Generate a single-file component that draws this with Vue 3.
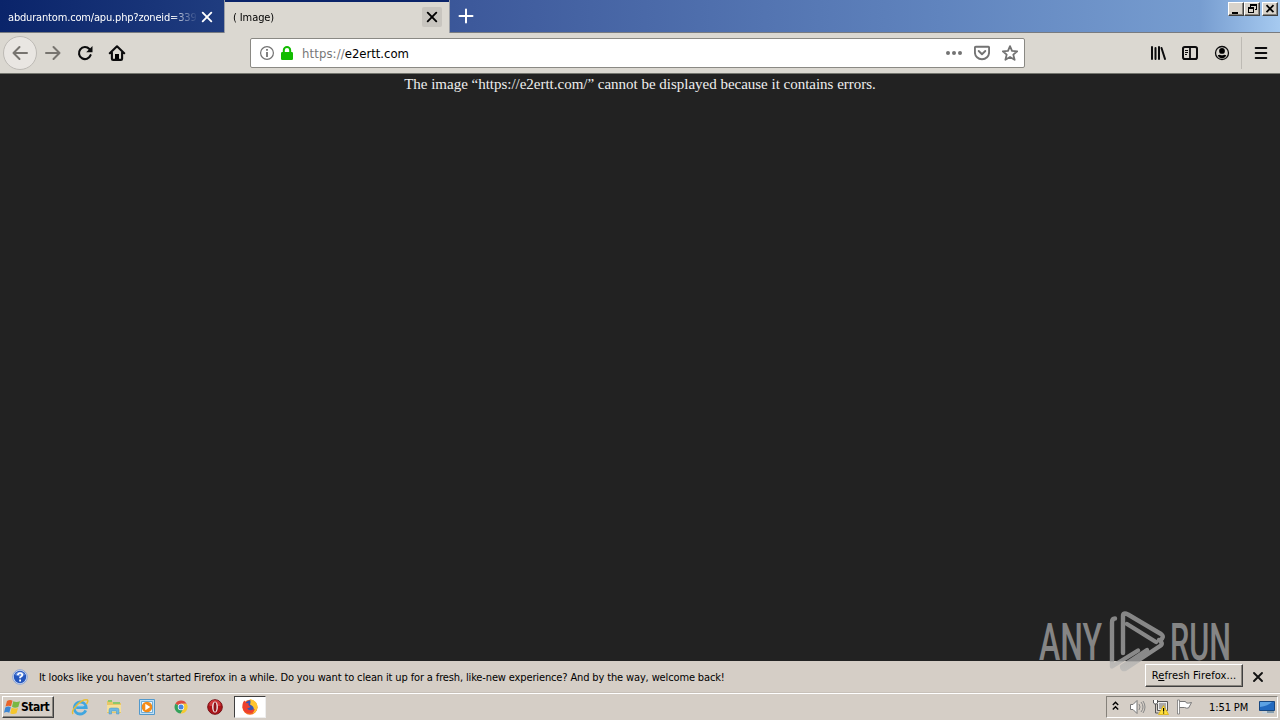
<script setup>
const tabs = [
  { title: 'abdurantom.com/apu.php?zoneid=339', active: false },
  { title: '( Image)', active: true },
]
</script>

<template>
  <div class="screen">
    <header class="titlebar">
      <div v-for="t in tabs" :key="t.title" class="tab" :class="{ active: t.active }">
        <span class="tab-title">{{ t.title }}</span>
        <span class="tab-close">
          <svg width="20" height="20" viewBox="0 0 20 20"><path d="M5.7 5.7l8.6 8.6M14.3 5.7l-8.6 8.6" fill="none" stroke="currentColor" stroke-width="1.9" stroke-linecap="round" /></svg>
        </span>
      </div>
      <svg class="plus" width="16" height="16" viewBox="0 0 16 16"><path d="M8 1.5v13M1.5 8h13" stroke="#fff" stroke-width="2" stroke-linecap="round" /></svg>
      <div class="winbtns">
        <span class="wb"><svg width="14" height="12" viewBox="0 0 14 12"><path d="M3 9h6v2H3z" /></svg></span>
        <span class="wb"><svg width="14" height="12" viewBox="0 0 14 12"><path d="M5 1h7v6h-2V6h1V3H6v1H5zM3 4h6v6H3zM4 6v3h4V6z" fill-rule="evenodd" /></svg></span>
        <span class="wb last"><svg width="14" height="12" viewBox="0 0 14 12"><path d="M3.5 2.2l7 7M10.5 2.2l-7 7" stroke="#000" stroke-width="1.8" /></svg></span>
      </div>
    </header>

    <nav class="toolbar">
      <span class="back"><svg width="16" height="16" viewBox="0 0 16 16"><path d="M15 8H1.5M7.5 2L1.5 8l6 6" /></svg></span>
      <svg class="forward" width="16" height="16" viewBox="0 0 16 16"><path d="M1 8h13.5M8.5 2l6 6-6 6" /></svg>
      <svg class="reload" width="16" height="16" viewBox="0 0 16 16"><path d="M13.6 10.2A6 6 0 1 1 12.4 4" fill="none" stroke="#0c0c0d" stroke-width="2.1" stroke-linecap="round" /><path d="M15.5 1v6.3H9.2z" fill="#0c0c0d" /></svg>
      <svg class="home" width="18" height="16" viewBox="0 0 18 16"><path d="M1.8 8.2L9 1.3l7.2 6.9M3.9 7.5v6.2q0 1.2 1.2 1.2h7.8q1.2 0 1.2-1.2V7.5" fill="none" stroke="#0c0c0d" stroke-width="2.1" stroke-linecap="round" stroke-linejoin="round" /><path d="M7 14V9h4v5z" /></svg>
      <div class="urlbar">
        <svg width="16" height="16" viewBox="0 0 16 16"><circle cx="8" cy="8" r="6.4" fill="none" stroke="#737373" stroke-width="1.2" /><path d="M7.1 4h1.8v1.8H7.1zM7.1 7h1.8v5H7.1z" fill="#737373" /></svg>
        <svg class="lock" width="14" height="16" viewBox="0 0 14 16"><path d="M3.8 8V5.300a3.200 3.200 0 0 1 6.400 0V8" fill="none" stroke="#12bc00" stroke-width="2" /><rect x="1" y="7" width="12" height="8" rx="1.200" fill="#12bc00" /></svg>
        <span class="url"><i>https://</i>e2ertt.com</span>
        <svg class="dots" width="18" height="16" viewBox="0 0 18 16" fill="#737373"><circle cx="3" cy="8" r="2" /><circle cx="9" cy="8" r="2" /><circle cx="15" cy="8" r="2" /></svg>
        <svg class="pocket" width="16" height="16" viewBox="0 0 16 16" fill="none" stroke="#737373" stroke-width="1.9" stroke-linecap="round" stroke-linejoin="round"><path d="M1.9 1.7h12.2q1 0 1 1v4.5a7.1 7.1 0 0 1-14.2 0V2.7q0-1 1-1z" /><path d="M4.7 6L8 9.2 11.3 6" /></svg>
        <svg class="star" width="16" height="16" viewBox="0 0 16 16"><path d="M8 1.200l2 4.700 5.200.4-3.900 3.300 1.300 5.200L8 12l-4.600 2.800 1.300-5.200L.8 6.300l5.200-.4z" fill="none" stroke="#737373" stroke-width="1.800" stroke-linejoin="round" /></svg>
      </div>
      <svg class="library" width="16" height="16" viewBox="0 0 16 16" stroke="#0c0c0d" stroke-width="2" stroke-linecap="round"><path d="M2 2v12M5.500 3v11M9 2v12M11.500 3l3.500 11" /></svg>
      <svg class="sidebar" width="16" height="16" viewBox="0 0 16 16"><rect x="1" y="2" width="14" height="12" rx="1.8" fill="none" stroke="#0c0c0d" stroke-width="2" /><path d="M8 2v12" stroke="#0c0c0d" stroke-width="1.8" /><path d="M3 5.5h3M3 7.5h3M3 9.5h2" stroke="#0c0c0d" /></svg>
      <svg class="account" width="16" height="16" viewBox="0 0 16 16"><circle cx="8" cy="8" r="6.5" fill="none" stroke="#0c0c0d" stroke-width="1.3" /><circle cx="8" cy="5.9" r="2.9" /><path d="M3.7 10.2q1-.5 2.2-.5 2.1 1.2 4.2 0 1.2 0 2.2.5-1.2 3-4.3 3t-4.3-3z" /></svg>
      <span class="divider"></span>
      <svg class="menu" width="16" height="16" viewBox="0 0 16 16"><path d="M2.7 3h10.6M2.7 8h10.6M2.7 13h10.6" stroke="#0c0c0d" stroke-width="2" stroke-linecap="round" /></svg>
    </nav>

    <main class="page">
      <span class="error">The image “https://e2ertt.com/” cannot be displayed because it contains errors.</span>
    </main>

    <section class="notice">
      <svg width="16" height="16" viewBox="0 0 16 16"><circle cx="8" cy="8" r="7.3" fill="#dfe7f8" stroke="#8ba4d4" /><circle cx="8" cy="8" r="6.2" fill="#2456bd" /><path d="M3 6a5.4 5.4 0 0 1 10 0q-5 2.5-10 0z" fill="#6b92e0" /><path d="M5.8 6.2Q6 4 8.1 4t2.2 1.9Q10.3 7.2 8.1 8.3v1" fill="none" stroke="#fff" stroke-width="1.7" /><path d="M7.2 10.6h1.8v1.8H7.2z" fill="#fff" /></svg>
      <span class="msg">It looks like you haven’t started Firefox in a while. Do you want to clean it up for a fresh, like-new experience? And by the way, welcome back!</span>
      <button class="refresh"><span>R<u>e</u>fresh Firefox...</span></button>
      <svg class="dismiss" width="12" height="12" viewBox="0 0 12 12"><path d="M2 2l8 8M10 2l-8 8" stroke="#111" stroke-width="1.9" stroke-linecap="round" /></svg>
    </section>

    <footer class="taskbar">
      <div class="start">
        <svg width="17" height="16" viewBox="0 0 17 16"><path d="M3 2q3-2 5.500-.3L7 7.300Q4.500 6 1.500 7.500z" fill="#e8642b" /><path d="M9.300 2.200q3 1.600 6.700 0L14.300 8q-3.500 1.500-6.300-.2z" fill="#79b843" /><path d="M1.300 8.400q3-1.600 5.500-.2l-1.500 5.500q-2.700-1.600-5.300 0z" fill="#3c86d4" /><path d="M7.700 8.800q3 1.500 6.300.2l-1.500 5.300q-3.300 1.600-6.300-.1z" fill="#f5c62d" /></svg>
        <span>Start</span>
      </div>
      <svg class="app ie" width="18" height="18" viewBox="0 0 18 18"><path d="M14.800 12.300Q13 16 9 16a6 6 0 1 1 6.200-6.500H5.200" fill="none" stroke="#41a6df" stroke-width="2.800" /><path d="M5.500 8h7" stroke="#8bd3f4" /><path d="M2 16Q0 13 6 7t10.500-5q1 1.200-1 4" fill="none" stroke="#e7bd35" stroke-width="1.500" /></svg>
      <svg class="app" width="18" height="18" viewBox="0 0 18 18"><path d="M2 3h5l1 2h8v10H2z" fill="#e8c766" /><path d="M3 2h4v2H3zM8 4h7v2H8z" fill="#8cc86c" /><path d="M2 7h14v7H2z" fill="#f6e09a" /><path d="M4 16v-4q0-2 2-2h6q2 0 2 2v4h-2.500v-3h-5v3z" fill="#6fb8e0" stroke="#4594c6" stroke-width=".5" /></svg>
      <svg class="app" width="18" height="18" viewBox="0 0 18 18"><path d="M1.500 1.500h15v15h-15z" fill="#c2e0f5" stroke="#5299cc" /><path d="M3.500 3.500h11v11h-11z" fill="#eaf5fc" stroke="#6fadd7" /><circle cx="9" cy="9" r="5.300" fill="#f48b18" /><path d="M7.300 5.800v6.400L12.300 9z" fill="#fff" /></svg>
      <svg class="app" width="18" height="18" viewBox="0 0 18 18"><path d="M9 9L3.400 5.700A6.500 6.500 0 0 1 14.700 5.800H9z" fill="#dd4b3e" /><path d="M9 9L3.400 5.700A6.500 6.500 0 0 0 8.600 15.500L11.500 11z" fill="#34a15a" /><path d="M9 5.800h5.700A6.500 6.500 0 0 1 8.600 15.500L12 10z" fill="#f5ca31" /><circle cx="9" cy="9" r="3.200" fill="#fff" /><circle cx="9" cy="9" r="2.500" fill="#4685df" /></svg>
      <svg class="app" width="18" height="18" viewBox="0 0 18 18"><circle cx="9" cy="9" r="7.300" fill="#ad1519" stroke="#771015" /><path d="M3.500 5a6.500 6.500 0 0 1 11 0v3h-11z" fill="#df4b4d" opacity=".7" /><ellipse cx="9" cy="9" rx="2.900" ry="5.500" fill="#eee" /><ellipse cx="9" cy="9" rx="1.500" ry="4.700" fill="#921318" /></svg>
      <div class="running">
        <svg width="18" height="18" viewBox="0 0 18 18"><circle cx="9" cy="9.200" r="7.500" fill="#f36a22" /><circle cx="9.300" cy="8" r="5.700" fill="#3856b4" /><path d="M9 1q6 1 7.400 6.500.8 5.500-4.600 8.300Q15 9 9 6.500 10 4 9 1z" fill="#ffc52f" /><path d="M1.500 9Q1 5 3.500 2.500L5 5l3 .5Q6.500 7 8.500 8l1 1q-2 1.500-3.500 1 2 3.500 6 1.500 1-.5 2 0-3 5-7.500 3.500Q2 14 1.500 9z" fill="#ee402e" /></svg>
      </div>
      <div class="tray">
        <svg class="chev" width="7" height="10" viewBox="0 0 7 10"><path d="M.8 4l2.700-2.700L6.200 4M.8 8.500l2.700-2.700 2.700 2.700" fill="none" stroke="#000" stroke-width="1.400" /></svg>
        <svg class="sound" width="17" height="16" viewBox="0 0 17 16"><path d="M1.500 5.500H4l4-4v13l-4-4H1.500z" fill="#fff" stroke="#777" /><path d="M10 5q2 3 0 6M12 3q4 5 0 10M14 2q4 6 0 12" fill="none" stroke="#888" /></svg>
        <svg class="net" width="17" height="16" viewBox="0 0 17 16"><path d="M5.500 2.500h10v9h-10z" fill="#eee" stroke="#555" /><path d="M7 4h7v6H7z" fill="#aaa" /><path d="M1 1h5v4H1z" fill="#fff" /><path d="M1.500 1v3q0 1 2 1t2-1V1M3.500 5v9h3" fill="none" stroke="#555" /><path d="M11.500 6.500l5 9h-10z" fill="#ffe03b" stroke="#d8aa00" stroke-width=".7" /><path d="M11 9h1.200v3.500H11zM11 13.500h1.200v1H11z" /></svg>
        <svg class="flag" width="17" height="16" viewBox="0 0 17 16"><path d="M2.500 2.500h7l1 1.500q2 .5 5-.5-1 2-3 5.500-2 .5-4-.5h-6z" fill="#fff" stroke="#777" /><path d="M1.500 1v14h2V1z" fill="#fff" stroke="#777" stroke-width=".8" /></svg>
        <span class="clock">1:51 PM</span>
        <svg class="desk" width="16" height="14" viewBox="0 0 16 14"><path d="M.5 1.500h15v9H.5z" fill="#226ac0" stroke="#174780" /><path d="M1 2h12Q9 6 1 7z" fill="#5ca2e4" /><path d="M3 11.500h12v2H3z" fill="#c7d2da" /><path d="M8 12h7" stroke="#456981" /></svg>
      </div>
    </footer>

    <svg class="watermark" width="210" height="74" viewBox="0 0 210 74">
      <defs>
        <linearGradient id="fade" gradientUnits="userSpaceOnUse" x1="0" y1="0" x2="0" y2="74"><stop offset="0" stop-color="#858585" /><stop offset=".75" stop-color="#8a8a8a" /><stop offset=".77" stop-color="#bab8b5" /><stop offset="1" stop-color="#c4c2bf" /></linearGradient>
      </defs>
      <text x="9" y="55" textLength="63" lengthAdjust="spacingAndGlyphs">ANY</text>
      <text x="140" y="55" textLength="61" lengthAdjust="spacingAndGlyphs">RUN</text>
      <g fill="none" stroke="url(#fade)" stroke-width="4.400" stroke-linejoin="round" stroke-linecap="round">
        <path d="M85 13.500q-3 0-3 4v44l26-16" />
        <path d="M97 19l29 18M93 48V11q0-4 5-1.500L131 29q4 3-1 6.500" />
        <path d="M129 35q5 3 1 6L96 63.500q-4 2-4-2L117 45" />
      </g>
    </svg>
  </div>
</template>

<style>
html, body { margin: 0; overflow: hidden; background: #222; }
</style>

<style scoped>
* { box-sizing: border-box; }
svg { display: block; flex-shrink: 0; }
.screen {
  width: 1280px; height: 720px; position: relative; overflow: hidden;
  display: grid; grid-template-rows: 33px 41px 587px 32px 27px;
  font-family: "DejaVu Sans Condensed", "DejaVu Sans", sans-serif; font-size: 11px; color: #000;
}
.titlebar {
  display: flex; border-bottom: 1px solid #787b80;
  background: linear-gradient(90deg, #0a246a 0, #203d80 230px, #3d599b 470px, #6084be 940px, #779dd0 1200px, #a6caf0 1280px);
}
.tab { width: 225px; height: 32px; padding: 2px 8px 0; display: flex; align-items: center; color: #fff; }
.tab-title { flex: 1; white-space: nowrap; letter-spacing: -.17px; mask-image: linear-gradient(90deg, #000 162px, transparent 190px); }
.tab-close { width: 20px; height: 20px; }
.tab.active { background: #dbd8d1; color: #000; height: 33px; margin-left: -1px; width: 226px; box-shadow: inset 0 2px #0a246a; border-right: 1px solid #9b9fa7; border-left: 1px solid #9b9fa7; padding: 1px 7px 0 8px; }
.tab.active .tab-title { letter-spacing: -.1px; }
.active .tab-close { background: #c8c5bf; border-radius: 2px; }
.plus { margin: 8px 0 0 8px; }
.winbtns { display: flex; margin: 2px 2px 0 auto; }
.wb { width: 16px; height: 14px; padding: 1px; background: #d8d3cb; border: 1px solid; border-color: #fff #404040 #404040 #fff; box-shadow: inset -1px -1px #89857e; }
.wb svg { margin: -1px; }
.wb.last { margin-left: 2px; }
.toolbar { background: #dbd8d1; display: flex; align-items: center; border-bottom: 1px solid #74766f; }
.back { width: 34px; height: 34px; margin-left: 3px; border: 1px solid #bdbab5; border-radius: 50%; background: #e9e6e2; display: grid; place-items: center; }
.back path, .forward path { fill: none; stroke: #77746f; stroke-width: 2; stroke-linecap: round; stroke-linejoin: round; }
.forward { margin-left: 8px; }
.reload { margin-left: 16px; }
.home { margin-left: 15px; }
.urlbar { width: 775px; height: 30px; margin-left: 124px; padding: 0 6px 0 8px; background: #fff; border: 1px solid #8a8984; border-radius: 2px; display: flex; align-items: center; }
.lock { margin-left: 5px; margin-top: -1px; }
.url { margin-left: 8px; font-size: 13px; letter-spacing: -.03px; }
.url i { font-style: normal; color: #777; letter-spacing: .1px; }
.dots { margin-left: auto; }
.pocket { margin-left: 11px; }
.star { margin-left: 12px; }
.library { margin-left: 125px; }
.sidebar { margin-left: 16px; }
.account { margin-left: 16px; }
.divider { width: 1px; height: 32px; margin-left: 11px; background: #bdbab4; }
.menu { margin-left: 11px; }
.page { background: #222; text-align: center; }
.error { font: 15px/20px "Liberation Serif", serif; letter-spacing: -.015px; color: #eee; white-space: nowrap; }
.notice { background: #d5cec6; display: flex; align-items: center; padding-left: 12px; border-bottom: 1px solid #c8c1b9; }
.msg { margin-left: 11px; padding-top: 1px; white-space: nowrap; letter-spacing: -.137px; }
.refresh { width: 98px; height: 23px; margin: -2px 0 0 auto; padding: 0; font: inherit; letter-spacing: .12px; white-space: nowrap; background: #d7d1c9; color: #000; border: 1px solid; border-color: #fff #404040 #404040 #fff; box-shadow: inset -1px -1px #89857e; }
.dismiss { margin: 0 16px 0 9px; }
.taskbar { background: #d5cec6; border-top: 1px solid #fff; display: flex; align-items: center; }
.start { width: 52px; height: 22px; margin-left: 2px; padding-left: 1px; display: flex; align-items: center; border: 1px solid; border-color: #fff #404040 #404040 #fff; box-shadow: inset -1px -1px #89857e; font-weight: bold; font-size: 12px; }
.start span { letter-spacing: -.5px; }
.app { margin-left: 16px; }
.app.ie { margin-left: 17px; }
.app + .app { margin-left: 15.7px; }
.running { width: 32px; height: 22px; margin-left: 10px; background: #fff; border: 1px solid; border-color: #404040 #eee #eee #404040; display: grid; place-items: center; }
.tray { height: 22px; width: 172px; margin: 0 2px 0 auto; border: 1px solid; border-color: #85817a #fff #fff #85817a; display: flex; align-items: center; }
.chev { margin-left: 5px; margin-top: -3px; }
.sound { margin-left: 10px; }
.net { margin-left: 6px; }
.flag { margin-left: 7px; }
.clock { margin-left: 16px; width: 40px; white-space: nowrap; letter-spacing: -.1px; }
.desk { margin-left: 10px; }
.watermark { position: absolute; left: 1030px; top: 605px; }
.watermark text { font-family: Roboto, sans-serif; font-weight: 500; font-size: 52px; fill: #858585; }
</style>
